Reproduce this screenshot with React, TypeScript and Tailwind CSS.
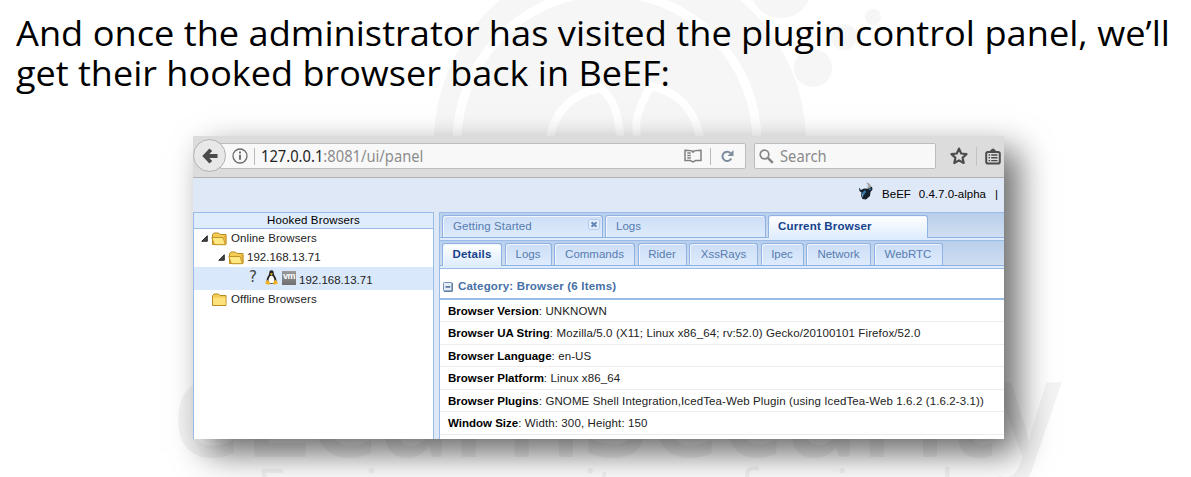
import type { ReactNode } from "react";

const details = [
  { label: "Browser Version", value: "UNKNOWN" },
  { label: "Browser UA String", value: "Mozilla/5.0 (X11; Linux x86_64; rv:52.0) Gecko/20100101 Firefox/52.0" },
  { label: "Browser Language", value: "en-US" },
  { label: "Browser Platform", value: "Linux x86_64" },
  { label: "Browser Plugins", value: "GNOME Shell Integration,IcedTea-Web Plugin (using IcedTea-Web 1.6.2 (1.6.2-3.1))" },
  { label: "Window Size", value: "Width: 300, Height: 150" },
];

function Watermark() {
  return (
    <div className="absolute inset-0 overflow-hidden" aria-hidden="true">
      <svg className="absolute inset-0" width="1191" height="477" viewBox="0 0 1191 477" fill="none">
        <g fill="#f6f6f6">
          <circle cx="620" cy="142" r="186" />
          <circle cx="781" cy="-13" r="31" />
          <circle cx="873" cy="17" r="8" />
          <circle cx="844" cy="37" r="13" />
          <circle cx="813" cy="68" r="19" />
        </g>
        <g stroke="#fff" strokeWidth="9">
          <circle cx="607" cy="142" r="150" />
          <path d="M549 145C552 112 572 94 600 88C613 98 619 112 621 145M638 145C634 115 636 118 650 86C675 90 697 108 701 145" strokeWidth="8" />
        </g>
      </svg>
      <div className="absolute left-[172px] top-[333px] origin-left scale-x-[0.89] whitespace-nowrap font-['Open_Sans'] text-[138px] leading-[140px] font-semibold text-[#f3f3f3]">eLearnSecurity</div>
      <div className="absolute left-[257px] top-[456px] origin-left scale-x-[1.02] whitespace-nowrap font-['Open_Sans'] text-[51px] leading-[60px] text-[#f3f3f3]">Forging security professionals</div>
    </div>
  );
}

function BackIcon() {
  return (
    <svg width="16" height="16" viewBox="0 0 16 16" fill="none" stroke="#4b4b4b" strokeWidth="3.8">
      <path d="M8.800 1.800L2.900 8l5.900 6.200M3.300 8h12.200" />
    </svg>
  );
}

function InfoIcon() {
  return (
    <svg width="16" height="16" viewBox="0 0 16 16" fill="none" stroke="#6b6b6b">
      <circle cx="8" cy="8" r="7" strokeWidth="1.3" />
      <path d="M8 6.8v5M8 3.6v1.9" strokeWidth="1.9" />
    </svg>
  );
}

function ReaderIcon() {
  return (
    <svg width="18" height="14" viewBox="0 0 18 14" fill="none" stroke="#808080" strokeWidth="1.5">
      <path d="M9 2.6C8 1.5 6.8 1.2 1 1.2v10.3h5.3L9 13l2.7-1.5H17V1.2c-5.800 0-7 .3-8 1.400M9 2.600v1.500M3.300 4.100h3.500M3.300 6.500h3.500M3.300 8.900h3.500" />
    </svg>
  );
}

function ReloadIcon() {
  return (
    <svg width="13" height="13" viewBox="0 0 13 13" fill="none">
      <path d="M10.300 8.600A4.700 4.700 0 1 1 9.500 3" stroke="#7e8d9d" strokeWidth="2" />
      <path d="M12.500 0v6H6.500z" fill="#7e8d9d" />
    </svg>
  );
}

function SearchIcon() {
  return (
    <svg width="15" height="15" viewBox="0 0 15 15" fill="none" stroke="#858585">
      <circle cx="5.500" cy="5.500" r="4.300" strokeWidth="1.700" />
      <path d="M8.800 8.800l5 5" strokeWidth="2.500" />
    </svg>
  );
}

function StarIcon() {
  return (
    <svg width="18" height="18" viewBox="0 0 18 18" fill="none" stroke="#4c4c4c" strokeWidth="2.200" strokeLinejoin="round">
      <path d="M9 1.600l2.200 4.900 5.300.6-3.900 3.600 1.100 5.300L9 13.400 4.300 16l1.100-5.300L1.500 7.100l5.300-.6z" />
    </svg>
  );
}

function ClipboardIcon() {
  return (
    <svg width="16" height="17" viewBox="0 0 16 17" fill="none" stroke="#4c4c4c">
      <rect x="1.200" y="4" width="13.600" height="11.600" rx="1.800" strokeWidth="2" />
      <path d="M4.500 3.500c1.500 0 1.500-2.500 3.500-2.500s2 2.500 3.500 2.500z" fill="#4c4c4c" strokeWidth="1" />
      <path d="M3.600 7h1.500M6.200 7h6.300M3.600 9.800h1.500M6.200 9.800h6.300M3.600 12.600h1.500M6.200 12.600h6.300" strokeWidth="1.400" />
    </svg>
  );
}

function BullIcon() {
  return (
    <svg width="16" height="18" viewBox="0 0 16 18">
      <path d="M8 .5c4 .5 6 3 4.500 6.500L9.500 8 7 7c3.500-1 4-4 1-6.500z" fill="#a3a6aa" />
      <path d="M1 5.500l2 2.500 3-1.500 4 .5 4-2.500.5 3-2 2.500-.5 4-4 3.500-3.500-.5L3 14l.5-3.500L1.500 9z" fill="#15202c" />
      <path d="M4 11l3-3 1 2-3 4zM10.500 7l3-.5-1.500 2z" fill="#3b7fb2" />
      <path d="M3.500 13.500l1.500-2-.5 4.500z" fill="#8cc0df" />
    </svg>
  );
}

function FolderIcon({ open = false }: { open?: boolean }) {
  return (
    <svg width="17" height="14" viewBox="0 0 17 14" className="shrink-0">
      <path d="M1.500 12.500v-10L3 1h4.500L9 2.500h6v10z" fill="#f3cb55" stroke="#b88b21" />
      {open ? (
        <path d="M.8 5.500h11.200l2.500 7.200H3.500z" fill="#ffe783" stroke="#c39522" />
      ) : (
        <path d="M2 4.500h12.500V12H2z" fill="#fde17a" />
      )}
      {open && <path d="M13 4h2.500v8.500z" fill="#d8a534" />}
    </svg>
  );
}

function Arrow() {
  return (
    <svg width="7" height="7" viewBox="0 0 7 7" className="shrink-0">
      <path d="M6.300.7v5.600H.7z" fill="#444" stroke="#222" strokeWidth=".9" />
    </svg>
  );
}

function PenguinIcon() {
  return (
    <svg width="13" height="15" viewBox="0 0 13 15">
      <path d="M6.500.3c2 0 2.300 1.700 2.300 3.300 0 1.700 2.700 4 2.700 7.400 0 2-2 3-5 3s-5-1-5-3c0-3.400 2.700-5.700 2.700-7.400 0-1.600.3-3.300 2.300-3.300z" fill="#242424" />
      <path d="M6.500 5.500c1.500 0 3 3 3 5.200 0 1.600-1.200 2.600-3 2.600s-3-1-3-2.600c0-2.200 1.500-5.200 3-5.200z" fill="#fff" />
      <path d="M5 3.800l1.500-.9 1.500.9-1.500 1.500zM.5 12l2-2.300 2.700 3.500-1.200 1.500-3.500-.9zM12.500 12l-2-2.300-2.700 3.500L9 14.700l3.500-.9z" fill="#f2b21f" />
    </svg>
  );
}

function MinusIcon() {
  return (
    <svg width="10" height="10" viewBox="0 0 10 10" fill="none">
      <rect x=".5" y=".5" width="8.500" height="8.500" rx="1" fill="#e8eef7" stroke="#7290b5" />
      <path d="M9.300 1v8.300H1" stroke="#4a6a95" />
      <path d="M2.500 4.900h4.800" stroke="#2d4f86" strokeWidth="1.300" />
    </svg>
  );
}

function CloseIcon() {
  return (
    <svg width="12" height="11" viewBox="0 0 12 11" fill="none">
      <rect x=".5" y=".5" width="11" height="10" rx="2" fill="#e3eefd" stroke="#b4cdee" />
      <path d="M3.500 3.200l5 4.600M8.500 3.200l-5 4.600" stroke="#6385b5" strokeWidth="2" />
    </svg>
  );
}

function Tab({ className, active = false, children }: { className: string; active?: boolean; children: ReactNode }) {
  return (
    <div
      className={`flex shrink-0 items-center rounded-t-[3px] border border-b-0 border-[#8db2e3] whitespace-nowrap shadow-[inset_1px_1px_0_#f1f6fe] ${
        active
          ? "bg-linear-to-b from-white to-[#deecfd] font-bold tracking-[0.2px] text-[#15428b]"
          : "bg-linear-to-b from-[#ccdef6] to-[#deebfd] text-[#567cb0]"
      } ${className}`}
    >
      {children}
    </div>
  );
}

function BrowserToolbar() {
  return (
    <div className="flex h-[42px] shrink-0 items-start border-b border-[#b2b2b2] bg-[#dcdcdc] pt-[7px] font-['Noto_Sans',sans-serif] text-[16px]">
      <div className="z-10 -mt-[4px] flex size-[33px] shrink-0 items-center justify-center rounded-full border border-[#b0b0b0] bg-[#e8e8e8]">
        <BackIcon />
      </div>
      <div className="-ml-[6px] flex h-[26px] w-[526px] shrink-0 items-center rounded-r-[2px] border border-[#bdbdbd] bg-[#f8f8f8] pl-[11px]">
        <InfoIcon />
        <div className="ml-[6px] h-[17px] w-px shrink-0 bg-[#b9b9b9]" />
        <div className="ml-[6px] w-[423px] shrink-0">
          <span className="inline-block origin-left scale-x-[0.92] whitespace-nowrap text-[#8d8d8d]"><span className="text-[#242424]">127.0.0.1</span>:8081/ui/panel</span>
        </div>
        <ReaderIcon />
        <div className="mx-[8px] h-[17px] w-px shrink-0 bg-[#b9b9b9]" />
        <div className="ml-[2px]"><ReloadIcon /></div>
      </div>
      <div className="ml-[8px] flex h-[26px] w-[182px] shrink-0 items-center rounded-[2px] border border-[#bdbdbd] bg-[#f8f8f8] pl-[4px]">
        <SearchIcon />
        <span className="ml-[6px] inline-block origin-left scale-x-[0.92] text-[#8a8a8a]">Search</span>
      </div>
      <div className="ml-[14px] flex h-[26px] items-center">
        <StarIcon />
        <div className="mx-[8px] h-[19px] w-px bg-[#c3c3c3]" />
        <ClipboardIcon />
      </div>
    </div>
  );
}

function BrowserTree() {
  return (
    <div className="flex w-[241px] shrink-0 flex-col border-x border-t border-[#99bbe8] bg-white text-[#222]">
      <div className="flex h-[16px] shrink-0 items-center justify-center border-b border-[#99bbe8] bg-[#dfecfd] tracking-[0.15px] text-black">Hooked Browsers</div>
      <div className="flex h-[19px] shrink-0 items-center pl-[7px] tracking-[0.1px]"><Arrow /><span className="ml-[3px]"><FolderIcon open /></span><span className="ml-[3px]">Online Browsers</span></div>
      <div className="flex h-[19px] shrink-0 items-center pl-[24px]"><Arrow /><span className="ml-[3px]"><FolderIcon open /></span><span className="ml-[2px]">192.168.13.71</span></div>
      <div className="flex h-[23px] shrink-0 items-center bg-[#d9e8fb] pl-[55px]">
        <span className="w-[16px] -translate-y-px font-['DejaVu_Sans'] text-[15px] text-[#444]">?</span>
        <span className="-translate-y-px"><PenguinIcon /></span>
        <span className="ml-[4px] flex h-[14px] w-[14px] -translate-y-px items-center justify-center bg-linear-to-b from-[#999] to-[#707070] text-[9px] leading-none font-bold text-white"><span className="-translate-y-px tracking-[-0.5px]">vm</span></span>
        <span className="ml-[3px] translate-y-[2px]">192.168.13.71</span>
      </div>
      <div className="flex h-[19px] shrink-0 items-center pl-[17px] tracking-[0.1px]"><FolderIcon /><span className="ml-[3px]">Offline Browsers</span></div>
    </div>
  );
}

function BrowserDetails() {
  return (
    <div className="flex min-w-0 flex-1 flex-col border-t border-l border-[#99bbe8] bg-white">
      <div className="flex h-[25px] shrink-0 gap-[2px] border-b border-[#8db2e3] bg-linear-to-b from-[#b9cfec] to-[#d0def0] pt-[2px] pl-[2px]">
        <Tab className="w-[161px] justify-between pr-[2px] pl-[10px] tracking-[0.1px]">Getting Started<span className="-mt-[5px]"><CloseIcon /></span></Tab>
        <Tab className="w-[161px] pl-[10px]">Logs</Tab>
        <Tab active className="-mb-px w-[160px] pl-[9px]">Current Browser</Tab>
      </div>
      <div className="h-[3px] shrink-0 border-b border-[#99bbe8] bg-[#deecfd]" />
      <div className="flex h-[25px] shrink-0 gap-[2.5px] border-b border-[#8db2e3] bg-linear-to-b from-[#b9cfec] to-[#d0def0] pt-[2px] pl-[2px]">
        <Tab active className="-mb-px w-[60px] justify-center">Details</Tab>
        <Tab className="w-[47px] justify-center">Logs</Tab>
        <Tab className="w-[81px] justify-center">Commands</Tab>
        <Tab className="w-[49px] justify-center">Rider</Tab>
        <Tab className="w-[69px] justify-center">XssRays</Tab>
        <Tab className="w-[43px] justify-center">Ipec</Tab>
        <Tab className="w-[65px] justify-center">Network</Tab>
        <Tab className="w-[69px] justify-center">WebRTC</Tab>
      </div>
      <div className="h-[3px] shrink-0 border-b border-[#99bbe8] bg-[#deecfd]" />
      <div className="flex h-[31px] shrink-0 items-center border-b-2 border-[#99bbe8] pt-[6px] pl-[3px] font-bold tracking-[0.18px] text-[#4670a8]">
        <MinusIcon /><span className="ml-[5px]">Category: Browser (6 Items)</span>
      </div>
      {details.map((item) => (
        <div key={item.label} className="flex h-[22.45px] shrink-0 items-center border-b border-[#ededed] pt-[2px] pl-[8px] tracking-[0.11px] whitespace-pre text-[#222]">
          <b className="tracking-normal text-black">{item.label}</b>: {item.value}
        </div>
      ))}
    </div>
  );
}

export default function App() {
  return (
    <div className="relative h-[477px] w-[1191px] overflow-hidden bg-white">
      <Watermark />
      <main className="relative flex flex-col pt-[12px]">
        <h1 className="h-[124px] pl-[16px] font-['Open_Sans',sans-serif] text-[35.5px] leading-[40px] whitespace-nowrap text-black">
          <span className="block origin-left scale-x-[1.02]">And once the administrator has visited the plugin control panel, we’ll</span>
          <span className="block origin-left scale-x-[1.015]">get their hooked browser back in BeEF:</span>
        </h1>
        <section className="ml-[193px] flex h-[303px] w-[811px] flex-col overflow-hidden bg-[#dfe8f6] font-['Liberation_Sans',Arial,sans-serif] text-[11.5px] leading-none shadow-[14px_14px_32px_rgba(0,0,0,0.6)]">
          <BrowserToolbar />
          <div className="flex h-[34px] shrink-0 items-center justify-end pr-[6px] text-black">
            <span className="-translate-y-[4px]"><BullIcon /></span>
            <span className="ml-[8px]">BeEF</span><span className="ml-[8px]">0.4.7.0-alpha</span><span className="ml-[9px]">|</span>
          </div>
          <div className="flex min-h-0 flex-1 gap-[5px]">
            <BrowserTree />
            <BrowserDetails />
          </div>
        </section>
      </main>
    </div>
  );
}
